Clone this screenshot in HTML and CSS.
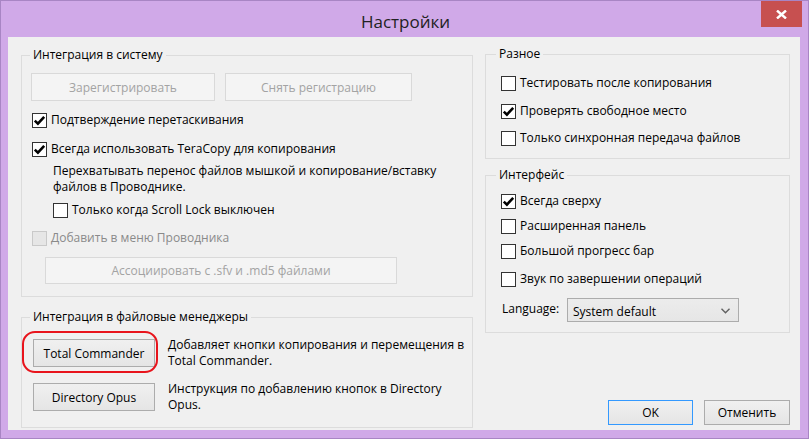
FILE: index.html
```html
<!DOCTYPE html>
<html lang="ru">
<head>
  <meta charset="UTF-8">
  <meta name="viewport" content="width=device-width, initial-scale=1.0">
  <title>Настройки</title>
  <link rel="stylesheet" href="styles.css">
</head>
<body>
  <div class="window">
    <div class="titlebar">
      <span class="title">Настройки</span>
      <div class="close">
        <svg width="11" height="9" viewBox="0 0 11 9"><path d="M1 0.5 L10 8.5 M10 0.5 L1 8.5" stroke="#fff" stroke-width="2.4"/></svg>
      </div>
    </div>

    <div class="client">
      <div class="col-left">
        <fieldset class="group group-system">
          <legend>Интеграция в систему</legend>
          <div class="btn-row">
            <button class="btn disabled btn-reg">Зарегистрировать</button>
            <button class="btn disabled btn-unreg">Снять регистрацию</button>
          </div>
          <div class="check row-drag">
            <span class="box"><svg width="13" height="13" viewBox="0 0 13 13"><path d="M1.8 6.6 L4.9 9.6 L11.2 2.8" stroke="#000" stroke-width="2.6" fill="none"/></svg></span>
            Подтверждение перетаскивания
          </div>
          <div class="check row-always">
            <span class="box"><svg width="13" height="13" viewBox="0 0 13 13"><path d="M1.8 6.6 L4.9 9.6 L11.2 2.8" stroke="#000" stroke-width="2.6" fill="none"/></svg></span>
            Всегда использовать TeraCopy для копирования
          </div>
          <p class="desc">Перехватывать перенос файлов мышкой и копирование/вставку<br>файлов в Проводнике.</p>
          <div class="check indent row-scroll">
            <span class="box"></span>
            Только когда Scroll Lock выключен
          </div>
          <div class="check off row-menu">
            <span class="box"></span>
            Добавить в меню Проводника
          </div>
          <button class="btn disabled btn-assoc">Ассоциировать с .sfv и .md5 файлами</button>
        </fieldset>

        <fieldset class="group group-fm">
          <legend>Интеграция в файловые менеджеры</legend>
          <div class="fm-row">
            <span class="highlight"><button class="btn btn-fm">Total Commander</button></span>
            <p class="fm-text">Добавляет кнопки копирования и перемещения в<br>Total Commander.</p>
          </div>
          <div class="fm-row">
            <button class="btn btn-fm">Directory Opus</button>
            <p class="fm-text">Инструкция по добавлению кнопок в Directory<br>Opus.</p>
          </div>
        </fieldset>
      </div>

      <div class="col-right">
        <fieldset class="group group-misc">
          <legend>Разное</legend>
          <div class="check r1">
            <span class="box"></span>
            Тестировать после копирования
          </div>
          <div class="check r2">
            <span class="box"><svg width="13" height="13" viewBox="0 0 13 13"><path d="M1.8 6.6 L4.9 9.6 L11.2 2.8" stroke="#000" stroke-width="2.6" fill="none"/></svg></span>
            Проверять свободное место
          </div>
          <div class="check r3">
            <span class="box"></span>
            Только синхронная передача файлов
          </div>
        </fieldset>

        <fieldset class="group group-ui">
          <legend>Интерфейс</legend>
          <div class="check u1">
            <span class="box"><svg width="13" height="13" viewBox="0 0 13 13"><path d="M1.8 6.6 L4.9 9.6 L11.2 2.8" stroke="#000" stroke-width="2.6" fill="none"/></svg></span>
            Всегда сверху
          </div>
          <div class="check u2">
            <span class="box"></span>
            Расширенная панель
          </div>
          <div class="check u3">
            <span class="box"></span>
            Большой прогресс бар
          </div>
          <div class="check u4">
            <span class="box"></span>
            Звук по завершении операций
          </div>
          <div class="lang-row">
            <span class="lang-label">Language:</span>
            <div class="select">
              <span>System default</span>
              <svg width="9" height="6" viewBox="0 0 9 6"><path d="M0.5 0.8 L4.5 4.8 L8.5 0.8" stroke="#606060" stroke-width="1.4" fill="none"/></svg>
            </div>
          </div>
        </fieldset>

        <div class="dlg-buttons">
          <button class="btn btn-dlg default">OK</button>
          <button class="btn btn-dlg">Отменить</button>
        </div>
      </div>
    </div>
  </div>
</body>
</html>
```
FILE: styles.css
```css
* {
  box-sizing: border-box;
}
body {
  margin: 0;
  font-family: "Open Sans", "Noto Sans", sans-serif;
  font-size: 12px;
  color: #000;
}
.window {
  position: relative;
  width: 809px;
  height: 439px;
  background: #d0a9e8;
  border: 1px solid #a885c4;
  display: flex;
  flex-direction: column;
}
.titlebar {
  flex: none;
  height: 36px;
  display: flex;
  align-items: center;
  justify-content: center;
}
.title {
  font-size: 17px;
  color: #222;
  margin-top: 4px;
  margin-left: 2px;
}
.close {
  position: absolute;
  top: 0;
  right: 6px;
  width: 41px;
  height: 26px;
  background: #c75050;
  display: flex;
  align-items: center;
  justify-content: center;
}
.client {
  flex: 1;
  min-height: 0;
  margin: 0 8px 8px 7px;
  background: #f0f0f0;
  display: grid;
  grid-template-columns: 452px 305px;
  column-gap: 12px;
  padding: 10px 10px 10px 13px;
}
.group {
  margin: 0;
  border: 1px solid #dcdcdc;
  min-width: 0;
}
.group legend {
  line-height: 16px;
  padding: 0 3px;
}
.group-system {
  padding: 10px 10px 12px 10px;
}
.group-system legend {
  margin-left: -2px;
}
.group-fm {
  margin-top: 12px;
  padding: 12px 10px 14px 11px;
}
.group-fm legend {
  margin-left: -3px;
}
.col-right {
  display: flex;
  flex-direction: column;
}
.col-right .group legend {
  margin-left: -5px;
}
.group-misc {
  margin-top: -1px;
  padding: 0 10px 10px 15px;
}
.group-ui {
  margin-top: 8px;
  padding: 0 10px 10px 15px;
}

/* buttons */
.btn {
  font: inherit;
  color: #000;
  height: 28px;
  padding: 0;
  border: 1px solid #acacac;
  background: linear-gradient(#f0f0f0, #e5e5e5);
  display: block;
}
.btn.disabled {
  color: #a3a3a3;
  border-color: #d9d9d9;
  background: #f4f4f4;
}
.btn-row {
  display: flex;
  gap: 10px;
  margin-left: -1px;
}
.btn-reg {
  width: 184px;
}
.btn-unreg {
  width: 187px;
}
.btn-assoc {
  width: 352px;
  height: 27px;
  margin: 9px 0 0 13px;
}

/* checkboxes */
.check {
  display: flex;
  align-items: center;
  height: 20px;
  line-height: 20px;
  white-space: nowrap;
}
.box {
  width: 15px;
  height: 15px;
  flex: none;
  margin-right: 4px;
  border: 1px solid #333;
  background: #fff;
  display: flex;
}
.check.off {
  color: #8a8a8a;
}
.check.off .box {
  border-color: #c9c9c9;
  background: #e6e6e6;
}
.indent {
  margin-left: 21px;
}
.row-drag {
  margin-top: 9px;
}
.row-always {
  margin-top: 9px;
}
.desc {
  margin: 4px 0 0 21px;
  line-height: 16px;
  white-space: nowrap;
}
.row-scroll {
  margin-top: 5px;
}
.row-menu {
  margin-top: 8px;
}
.r1 { margin-top: 11px; }
.r2 { margin-top: 8px; }
.r3 { margin-top: 7px; }
.u1 { margin-top: 8px; }
.u2 { margin-top: 5px; }
.u3 { margin-top: 5px; }
.u4 { margin-top: 8px; }

/* file managers */
.fm-row {
  display: flex;
  align-items: center;
  gap: 13px;
}
.fm-row + .fm-row {
  margin-top: 12px;
}
.btn-fm {
  width: 122px;
  flex: none;
}
.fm-text {
  margin: 0;
  line-height: 16px;
  white-space: nowrap;
}
.highlight {
  position: relative;
  display: block;
  flex: none;
}
.highlight::after {
  content: "";
  position: absolute;
  left: -11px;
  top: -8px;
  right: -3px;
  bottom: -6px;
  border: 2.5px solid #e8141c;
  border-radius: 13px;
}

/* language */
.lang-row {
  display: flex;
  align-items: center;
  margin-top: 9px;
}
.lang-label {
  width: 66px;
  padding-left: 1px;
  margin-top: -4px;
}
.select {
  width: 172px;
  height: 24px;
  border: 1px solid #acacac;
  background: linear-gradient(#ececec, #e6e6e6);
  display: flex;
  align-items: center;
  justify-content: space-between;
  padding: 2px 8px 0 5px;
}

/* dialog buttons */
.dlg-buttons {
  margin-top: auto;
  margin-bottom: 3px;
  display: flex;
  justify-content: flex-end;
  gap: 11px;
}
.btn-dlg {
  height: 25px;
  width: 86px;
}
.btn-dlg.default {
  width: 85px;
  border-color: #3399ff;
}
```
